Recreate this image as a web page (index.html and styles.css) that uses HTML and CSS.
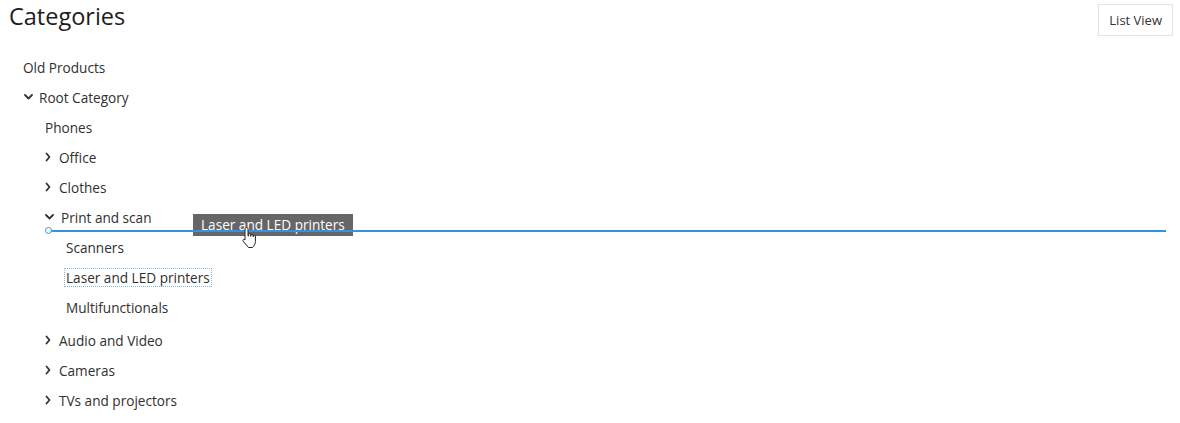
FILE: index.html
```html
<!DOCTYPE html>
<html lang="en">
<head>
  <meta charset="UTF-8" />
  <title>Categories</title>
  <link rel="stylesheet" href="styles.css">
</head>
<body>

  <div class="page">
    <div class="page-header">
      <h1>Categories</h1>
      <button class="view-btn">List View</button>
    </div>

    <ul class="tree">
      <li><div class="node">Old Products</div></li>
      <li>
        <div class="node">
          <svg class="toggler down" viewBox="0 0 11 8"><path d="M1 2 L4.5 5.5 L8 2" /></svg>
          Root Category
        </div>
        <ul>
          <li><div class="node">Phones</div></li>
          <li>
            <div class="node">
              <svg class="toggler right" viewBox="0 0 9 10"><path d="M1.5 1.5 L4.5 5 L1.5 8.5" /></svg>
              Office
            </div>
          </li>
          <li>
            <div class="node">
              <svg class="toggler right" viewBox="0 0 9 10"><path d="M1.5 1.5 L4.5 5 L1.5 8.5" /></svg>
              Clothes
            </div>
          </li>
          <li class="open">
            <div class="node">
              <svg class="toggler down wide" viewBox="0 0 11 8"><path d="M1 2 L4.5 5.5 L8 2" /></svg>
              Print and scan
            </div>
            <ul>
              <li><div class="node">Scanners</div></li>
              <li><div class="node"><span class="focused">Laser and LED printers</span></div></li>
              <li><div class="node">Multifunctionals</div></li>
            </ul>
          </li>
          <li>
            <div class="node">
              <svg class="toggler right" viewBox="0 0 9 10"><path d="M1.5 1.5 L4.5 5 L1.5 8.5" /></svg>
              Audio and Video
            </div>
          </li>
          <li>
            <div class="node">
              <svg class="toggler right" viewBox="0 0 9 10"><path d="M1.5 1.5 L4.5 5 L1.5 8.5" /></svg>
              Cameras
            </div>
          </li>
          <li>
            <div class="node">
              <svg class="toggler right" viewBox="0 0 9 10"><path d="M1.5 1.5 L4.5 5 L1.5 8.5" /></svg>
              TVs and projectors
            </div>
          </li>
        </ul>
      </li>
    </ul>

    <!-- drag preview and drop marker -->
    <div class="drag-ghost">Laser and LED printers</div>
    <div class="drop-line"></div>
    <svg class="cursor" viewBox="0 0 18 24">
      <path d="M5.5 1.5 C6.6 1.5 7 2.2 7 3.2 L7 10 L7.6 10 L7.6 8.2 C7.6 7.2 9.6 7.2 9.6 8.2 L9.6 10.2 L10 10.2 L10 9 C10 8 12 8 12 9 L12 10.6 L12.4 10.6 L12.4 10 C12.4 9 14.4 9 14.4 10 L14.4 15.5 C14.4 18 13 20 11.5 21.5 L7.5 21.5 L2.2 15.2 C1.4 14.2 2.6 12.8 3.6 13.6 L4 14 L4 3.2 C4 2.2 4.4 1.5 5.5 1.5 Z" />
    </svg>
  </div>

</body>
</html>
```

FILE: styles.css
```css
body {
  margin: 0;
  font-family: 'Open Sans', 'Liberation Sans', sans-serif;
  color: #333;
  background: #fff;
}

.page {
  position: relative;
  padding: 4px 7px 0 9px;
}

.page-header {
  display: flex;
  justify-content: space-between;
  align-items: flex-start;
}

h1 {
  margin: 0;
  font-size: 23.5px;
  font-weight: 400;
  line-height: 24px;
  color: #1d1d1d;
}

.view-btn {
  font-family: inherit;
  font-size: 13px;
  color: #333;
  background: #fff;
  border: 1px solid #e3e3e3;
  padding: 0 10px;
  height: 32px;
  cursor: pointer;
}

.tree,
.tree ul {
  list-style: none;
  margin: 0;
  padding: 0;
}

.tree {
  margin-top: 16px;
  padding-left: 14px;
}

.tree ul {
  padding-left: 21px;
}

.tree > li > ul {
  padding-left: 22px;
}

.tree li.open > ul {
  margin-bottom: 3px;
}

.node {
  display: flex;
  align-items: center;
  height: 30px;
  font-size: 13.6px;
  color: #303030;
  white-space: nowrap;
}

.toggler {
  fill: none;
  stroke: #333;
  stroke-width: 1.8;
  stroke-linecap: round;
  stroke-linejoin: round;
  flex-shrink: 0;
  margin-right: 5px;
}

.toggler.down {
  width: 11px;
  height: 8px;
  margin-left: 1px;
  margin-right: 4px;
}

.toggler.down.wide {
  margin-left: 0;
  margin-right: 5px;
}

.toggler.right {
  width: 9px;
  height: 10px;
}

.focused {
  outline: 1px dotted #86b4e6;
  outline-offset: 0;
  padding: 0 1px;
  margin-left: -1px;
  line-height: 17px;
}

.drag-ghost {
  position: absolute;
  left: 193px;
  top: 214px;
  height: 22px;
  line-height: 22px;
  padding: 0 8px;
  background: #666;
  color: #fff;
  font-size: 13.6px;
  white-space: nowrap;
}

.drop-line {
  position: absolute;
  left: 50px;
  top: 230px;
  width: 1116px;
  height: 2px;
  background: #3592e2;
}

.drop-line::before {
  content: "";
  position: absolute;
  left: -5px;
  top: -3px;
  width: 5px;
  height: 5px;
  border: 1.5px solid #3592e2;
  border-radius: 50%;
  background: #fff;
}

.cursor {
  position: absolute;
  left: 241px;
  top: 226px;
  width: 18px;
  height: 24px;
  fill: #fff;
  stroke: #222;
  stroke-width: 1;
}
```
